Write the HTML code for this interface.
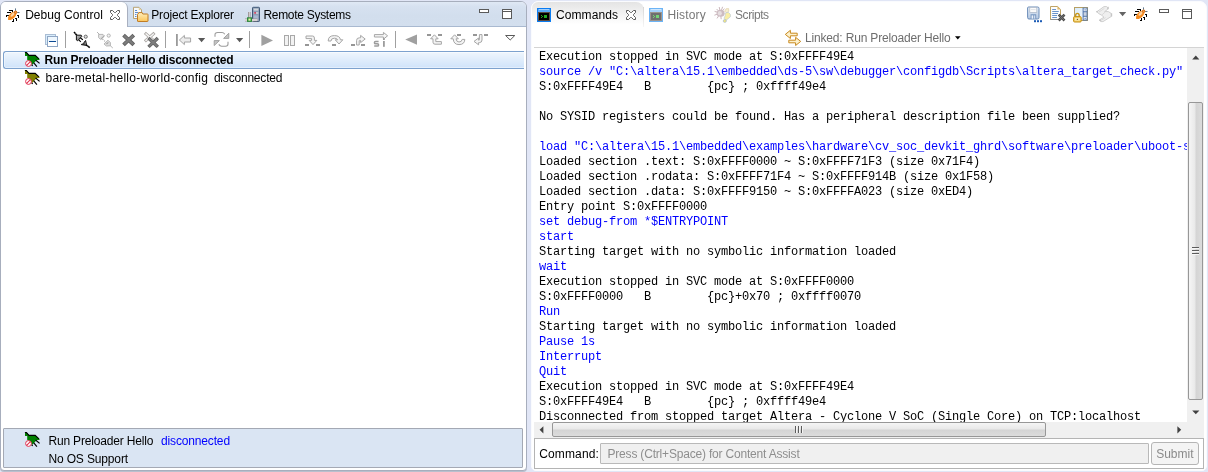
<!DOCTYPE html>
<html>
<head>
<meta charset="utf-8">
<style>
html,body{margin:0;padding:0;}
body{width:1208px;height:472px;background:#e1e6f6;position:relative;overflow:hidden;font-family:"Liberation Sans",sans-serif;font-size:12px;color:#000;}
.abs{position:absolute;}
.t{position:absolute;white-space:nowrap;line-height:14px;height:14px;}
svg{position:absolute;overflow:visible;}
.sep{position:absolute;width:1px;top:31px;height:17px;background:#a0a0a0;}
.con{position:absolute;font-family:"Liberation Mono",monospace;font-size:12px;letter-spacing:-0.2px;line-height:15px;white-space:pre;color:#000;}
.con .b{color:#0000ff;}
</style>
</head>
<body>
<div id="wrap" style="position:absolute;left:0;top:0;width:1208px;height:472px;will-change:transform;">
<!-- ================= LEFT PANEL ================= -->
<div class="abs" id="lp" style="left:0;top:1px;width:527px;height:470px;box-sizing:border-box;border:1px solid #a7aebd;border-radius:6px 6px 4px 4px;background:#fff;overflow:hidden;box-shadow:0 1px 0 #b9bfcd;"></div>
<!-- tab bar -->
<div class="abs" style="left:1px;top:2px;width:525px;height:24px;border-radius:5px 5px 0 0;background:linear-gradient(#e0e9f5 0%,#d6e1f0 20%,#d2deed 60%,#d3dfee 100%);"></div>
<div class="abs" style="left:1px;top:26px;width:525px;height:1px;background:#a9b9d0;"></div>
<!-- active tab -->
<div class="abs" style="left:1px;top:2px;width:127px;height:25px;background:#fff;border-radius:5px 6px 0 0;border-right:1px solid #a9b0c0;box-sizing:border-box;"></div>
<div class="t" id="tDebug" style="left:25.2px;top:8px;letter-spacing:0.02px;">Debug Control</div>
<div class="t" id="tProj" style="left:151.3px;top:8px;letter-spacing:-0.18px;">Project Explorer</div>
<div class="t" id="tRemote" style="left:263.4px;top:8px;letter-spacing:-0.29px;">Remote Systems</div>

<!-- toolbar separators -->
<div class="sep" style="left:65px;"></div>
<div class="sep" style="left:165px;"></div>
<div class="sep" style="left:249px;"></div>
<div class="sep" style="left:395px;"></div>

<!-- tree -->
<div class="abs" style="left:3px;top:51px;width:521px;height:18px;box-sizing:border-box;border:1px solid #7da2ce;border-right:none;border-radius:3px 0 0 3px;background:linear-gradient(#eff6fd,#cfe3fa);box-shadow:inset 0 1px 0 rgba(255,255,255,0.55), inset 0 -1px 0 rgba(255,255,255,0.4), inset 1px 0 0 rgba(255,255,255,0.4);"></div>
<div class="t" id="tRow1" style="left:44.6px;top:53px;font-weight:bold;letter-spacing:-0.21px;">Run Preloader Hello disconnected</div>
<div class="t" id="tRow2" style="left:45.5px;top:71px;"><span style="letter-spacing:0.25px;">bare-metal-hello-world-config</span><span style="letter-spacing:-0.2px;position:absolute;left:168.4px;">disconnected</span></div>

<!-- status -->
<div class="abs" style="left:3px;top:428px;width:520px;height:40px;box-sizing:border-box;border:1px solid #a4a9b4;border-radius:1px;background:#dae5f3;"></div>
<div class="t" id="tSt1" style="left:48.4px;top:434px;letter-spacing:-0.17px;">Run Preloader Hello</div>
<div class="t" id="tSt2" style="left:161px;top:434px;color:#0000ff;letter-spacing:-0.15px;">disconnected</div>
<div class="t" id="tSt3" style="left:48.4px;top:452px;letter-spacing:-0.14px;">No OS Support</div>

<!-- ================= RIGHT PANEL ================= -->
<div class="abs" id="rp" style="left:531px;top:1px;width:676px;height:470px;box-sizing:border-box;border:1px solid #fafbfe;border-radius:7px 7px 5px 5px;background:#fff;overflow:hidden;"></div>
<!-- commands tab -->
<div class="abs" style="left:532px;top:2px;width:112px;height:25px;border-radius:6px 8px 0 0;background:linear-gradient(#e4e4e4 0%,#f1f1f1 40%,#ffffff 90%);"></div><div class="abs" style="left:643px;top:7px;width:1px;height:20px;background:linear-gradient(#d6d6d6,#f6f6f6);"></div>
<div class="t" id="tCmds" style="left:556px;top:8px;letter-spacing:0.08px;">Commands</div>
<div class="t" id="tHist" style="left:667.4px;top:8px;color:#787878;letter-spacing:0.16px;">History</div>
<div class="t" id="tScr" style="left:735px;top:8px;color:#787878;letter-spacing:-0.43px;">Scripts</div>
<div class="t" id="tLink" style="left:805px;top:31px;color:#6e6e6e;letter-spacing:-0.17px;">Linked: Run Preloader Hello</div>
<div class="abs" style="left:534px;top:47px;width:670px;height:1px;background:#d4d4d4;"></div>

<!-- console -->
<div class="abs" style="left:534px;top:48px;width:653px;height:374px;overflow:hidden;">
<div class="con" style="left:5px;top:2px;">Execution stopped in SVC mode at S:0xFFFF49E4
<span class="b">source /v "C:\altera\15.1\embedded\ds-5\sw\debugger\configdb\Scripts\altera_target_check.py"</span>
S:0xFFFF49E4   B        {pc} ; 0xffff49e4

No SYSID registers could be found. Has a peripheral description file been supplied?

<span class="b">load "C:\altera\15.1\embedded\examples\hardware\cv_soc_devkit_ghrd\software\preloader\uboot-s</span>
Loaded section .text: S:0xFFFF0000 ~ S:0xFFFF71F3 (size 0x71F4)
Loaded section .rodata: S:0xFFFF71F4 ~ S:0xFFFF914B (size 0x1F58)
Loaded section .data: S:0xFFFF9150 ~ S:0xFFFFA023 (size 0xED4)
Entry point S:0xFFFF0000
<span class="b">set debug-from *$ENTRYPOINT</span>
<span class="b">start</span>
Starting target with no symbolic information loaded
<span class="b">wait</span>
Execution stopped in SVC mode at S:0xFFFF0000
S:0xFFFF0000   B        {pc}+0x70 ; 0xffff0070
<span class="b">Run</span>
Starting target with no symbolic information loaded
<span class="b">Pause 1s</span>
<span class="b">Interrupt</span>
<span class="b">Quit</span>
Execution stopped in SVC mode at S:0xFFFF49E4
S:0xFFFF49E4   B        {pc} ; 0xffff49e4
Disconnected from stopped target Altera - Cyclone V SoC (Single Core) on TCP:localhost</div>
</div>

<!-- vertical scrollbar -->
<div class="abs" id="vsb" style="left:1187px;top:48px;width:17px;height:374px;background:#f0f0f0;"></div>
<div class="abs" id="vthumb" style="left:1188px;top:102px;width:15px;height:298px;box-sizing:border-box;border:1px solid #979797;border-radius:2px;background:linear-gradient(90deg,#f5f5f5 0%,#e9e9e9 45%,#d4d4d4 55%,#dcdcdc 100%);"></div>
<!-- horizontal scrollbar -->
<div class="abs" id="hsb" style="left:534px;top:422px;width:653px;height:16px;background:#f0f0f0;"></div>
<div class="abs" id="hthumb" style="left:552px;top:422px;width:494px;height:15px;box-sizing:border-box;border:1px solid #979797;border-radius:2px;background:linear-gradient(#f5f5f5 0%,#e9e9e9 45%,#d4d4d4 55%,#dcdcdc 100%);"></div>
<div class="abs" style="left:1187px;top:422px;width:17px;height:16px;background:#f0f0f0;"></div>

<!-- command row -->
<div class="abs" style="left:534px;top:438px;width:670px;height:31px;box-sizing:border-box;border:1px solid #b4b4b4;background:#fff;"></div>
<div class="t" id="tCmd" style="left:539.2px;top:447px;letter-spacing:0.15px;">Command:</div>
<div class="abs" style="left:600px;top:443px;width:549px;height:21px;box-sizing:border-box;border:1px solid #b9b9b9;border-radius:1px;background:#f0f0f0;"></div>
<div class="t" id="tPh" style="left:607.5px;top:447px;color:#8e8e8e;letter-spacing:-0.19px;">Press (Ctrl+Space) for Content Assist</div>
<div class="abs" style="left:1151px;top:442px;width:48px;height:23px;box-sizing:border-box;border:1px solid #b5b5b5;border-radius:3px;background:#f4f4f4;"></div>
<div class="t" id="tSub" style="left:1156.2px;top:447px;color:#8a8a8a;">Submit</div>

<!-- ICONS-BEGIN -->
<!-- horses -->
<svg style="left:24px;top:51px;" width="16" height="16" viewBox="0 0 16 16">
<polygon points="1,1.6 3,1.6 5.2,4.2 11.3,4.2 15.6,8 15.4,9 12.8,9 8.3,13.8 7.2,13.2 3.2,8.8 3.2,5 1,5" fill="#008000"/>
<path d="M0.9,1.5 L2.9,1.5 M2.4,1.6 L5,4.4 L11.2,4.4 L14.9,7.8" fill="none" stroke="#000" stroke-width="1.1"/>
<path d="M11.6,9 L15.6,12.4 M9.6,11.6 L12.9,15.6 M7.6,13.6 L8.6,15" fill="none" stroke="#000" stroke-width="1.2"/>
<circle cx="4.5" cy="12.5" r="2.9" fill="#fff" stroke="#e2304e" stroke-width="1"/>
<path d="M2.6,14.4 L6.4,10.6" stroke="#e2304e" stroke-width="1.1"/>
</svg><svg style="left:24px;top:69px;" width="16" height="16" viewBox="0 0 16 16">
<polygon points="1,1.6 3,1.6 5.2,4.2 11.3,4.2 15.6,8 15.4,9 12.8,9 8.3,13.8 7.2,13.2 3.2,8.8 3.2,5 1,5" fill="#808000"/>
<path d="M0.9,1.5 L2.9,1.5 M2.4,1.6 L5,4.4 L11.2,4.4 L14.9,7.8" fill="none" stroke="#000" stroke-width="1.1"/>
<path d="M11.6,9 L15.6,12.4 M9.6,11.6 L12.9,15.6 M7.6,13.6 L8.6,15" fill="none" stroke="#000" stroke-width="1.2"/>
<circle cx="4.5" cy="12.5" r="2.9" fill="#fff" stroke="#e2304e" stroke-width="1"/>
<path d="M2.6,14.4 L6.4,10.6" stroke="#e2304e" stroke-width="1.1"/>
</svg><svg style="left:24px;top:431px;" width="16" height="16" viewBox="0 0 16 16">
<polygon points="1,1.6 3,1.6 5.2,4.2 11.3,4.2 15.6,8 15.4,9 12.8,9 8.3,13.8 7.2,13.2 3.2,8.8 3.2,5 1,5" fill="#008000"/>
<path d="M0.9,1.5 L2.9,1.5 M2.4,1.6 L5,4.4 L11.2,4.4 L14.9,7.8" fill="none" stroke="#000" stroke-width="1.1"/>
<path d="M11.6,9 L15.6,12.4 M9.6,11.6 L12.9,15.6 M7.6,13.6 L8.6,15" fill="none" stroke="#000" stroke-width="1.2"/>
<circle cx="4.5" cy="12.5" r="2.9" fill="#fff" stroke="#e2304e" stroke-width="1"/>
<path d="M2.6,14.4 L6.4,10.6" stroke="#e2304e" stroke-width="1.1"/>
</svg>
<!-- /horses -->
<!-- bugs -->
<svg style="left:4px;top:6px;" width="16" height="17" viewBox="0 0 16 17">
<path d="M5,4.5 H9 M8.5,4 V6 M3,6.5 H6.5 M2.5,9 V11 M2,9.5 H5 M13,9.5 H15 M14.5,9 V12 M11,12.5 H13 M12.5,12 V15 M9.5,13 V16 M8,15.5 H10" fill="none" stroke="#000" stroke-width="1" shape-rendering="crispEdges"/>
<path d="M11.5,2.4 V4.8 M13.1,6.5 H15.5" fill="none" stroke="#5f788f" stroke-width="1"/>
<ellipse cx="0" cy="0" rx="5.1" ry="2.9" transform="translate(8.2,9.8) rotate(-45)" fill="#f58c22"/>
<ellipse cx="0" cy="0" rx="2.8" ry="1.2" transform="translate(8.6,8.6) rotate(-45)" fill="#fbd3a4"/>
<path d="M3.9,14 L5.4,10.7 L7.2,13.9 Z" fill="#f58c22"/>
<circle cx="11.6" cy="6.3" r="1.7" fill="#d9701c"/>
<circle cx="11.7" cy="6.2" r="0.6" fill="#f7b45c"/>
</svg><svg style="left:1132px;top:5px;" width="16" height="17" viewBox="0 0 16 17">
<path d="M5,4.5 H9 M8.5,4 V6 M3,6.5 H6.5 M2.5,9 V11 M2,9.5 H5 M13,9.5 H15 M14.5,9 V12 M11,12.5 H13 M12.5,12 V15 M9.5,13 V16 M8,15.5 H10" fill="none" stroke="#000" stroke-width="1" shape-rendering="crispEdges"/>
<path d="M11.5,2.4 V4.8 M13.1,6.5 H15.5" fill="none" stroke="#5f788f" stroke-width="1"/>
<ellipse cx="0" cy="0" rx="5.1" ry="2.9" transform="translate(8.2,9.8) rotate(-45)" fill="#f58c22"/>
<ellipse cx="0" cy="0" rx="2.8" ry="1.2" transform="translate(8.6,8.6) rotate(-45)" fill="#fbd3a4"/>
<path d="M3.9,14 L5.4,10.7 L7.2,13.9 Z" fill="#f58c22"/>
<circle cx="11.6" cy="6.3" r="1.7" fill="#d9701c"/>
<circle cx="11.7" cy="6.2" r="0.6" fill="#f7b45c"/>
</svg>
<!-- /bugs -->
<!-- close X (debug control tab) -->
<svg style="left:110px;top:10px;" width="10" height="10" viewBox="0 0 10 10"><polygon points="0.5,0.5 2.5,0.5 4.5,2.5 5.5,2.5 7.5,0.5 9.5,0.5 9.5,2.5 7.5,4.5 7.5,5.5 9.5,7.5 9.5,9.5 7.5,9.5 5.5,7.5 4.5,7.5 2.5,9.5 0.5,9.5 0.5,7.5 2.5,5.5 2.5,4.5 0.5,2.5" fill="#fff" stroke="#5a5a5a" stroke-width="1"/></svg>
<!-- close X (commands tab) -->
<svg style="left:626px;top:10px;" width="10" height="10" viewBox="0 0 10 10"><polygon points="0.5,0.5 2.5,0.5 4.5,2.5 5.5,2.5 7.5,0.5 9.5,0.5 9.5,2.5 7.5,4.5 7.5,5.5 9.5,7.5 9.5,9.5 7.5,9.5 5.5,7.5 4.5,7.5 2.5,9.5 0.5,9.5 0.5,7.5 2.5,5.5 2.5,4.5 0.5,2.5" fill="#fff" stroke="#5a5a5a" stroke-width="1"/></svg>
<!-- project explorer -->
<svg style="left:132px;top:5px;" width="18" height="18" viewBox="0 0 18 18">
<defs><linearGradient id="fold" x1="0" y1="0" x2="0" y2="1"><stop offset="0" stop-color="#fff0c0"/><stop offset="1" stop-color="#fcc55a"/></linearGradient></defs>
<path d="M1.5,2.3 H7 L9.5,4.8 V13.5 H1.5 Z" fill="#f6f9fd" stroke="#b9a374" stroke-width="1"/>
<path d="M6.8,2.5 V5 H9.3 Z" fill="#e6cf96"/>
<path d="M3,5.5 H5 M3,7.5 H6 M3,9.5 H4.5 M3,11.5 H4.5" stroke="#5f8ccc" stroke-width="1"/>
<path d="M5.5,9.6 Q5.5,9 6.1,9 L6.6,7.6 H10.2 L10.8,9 H15.4 Q16,9 16,9.6 V16 Q16,16.5 15.4,16.5 H6.1 Q5.5,16.5 5.5,16 Z" fill="url(#fold)" stroke="#c07c24" stroke-width="1"/>
</svg>
<!-- remote systems -->
<svg style="left:244px;top:5px;" width="18" height="18" viewBox="0 0 18 18">
<rect x="8.5" y="2.3" width="7" height="14.2" rx="0.8" fill="#8d9eb6" stroke="#3f5877" stroke-width="1"/>
<rect x="9.7" y="3.6" width="4.6" height="2" fill="#d2d6dc"/>
<rect x="9.7" y="7" width="4.6" height="2" fill="#c3c9d3"/>
<rect x="10.2" y="7.2" width="1.8" height="1.4" fill="#d3274a"/>
<rect x="9.7" y="10.4" width="4.2" height="5.4" fill="#a9b9d2"/>
<rect x="4" y="7" width="2.6" height="6" fill="#9a9496"/><rect x="4.9" y="7" width="0.9" height="6" fill="#dcd8d8"/>
<rect x="1" y="13.6" width="12.4" height="2.8" fill="#8e8686"/><rect x="1" y="14.3" width="12.4" height="1.4" fill="#f8f5f2"/>
<rect x="3" y="12.3" width="5" height="4.6" fill="#2d8a3c"/><rect x="4.4" y="13.5" width="2.2" height="2.2" fill="#e4f6a8"/>
</svg>
<!-- commands -->
<svg style="left:537px;top:8px;" width="14" height="14" viewBox="0 0 14 14" shape-rendering="crispEdges">
<rect x="0" y="0" width="14" height="14" fill="#0a7cf2"/>
<rect x="1" y="1" width="12" height="3" fill="#5aaaf8"/><rect x="2" y="1" width="10" height="1" fill="#a6d0fb"/>
<rect x="1" y="4" width="12" height="9" fill="#5b4b43"/><rect x="2" y="5" width="10" height="7" fill="#000"/>
<rect x="7" y="7" width="3" height="3" fill="#22a822"/>
<path d="M4,7 h1 v1 h1 v1 h-1 v1 h-1 v-1 h1 v-1 h-1 z" fill="#22a822"/>
</svg>
<!-- history -->
<svg style="left:649px;top:8px;" width="14" height="14" viewBox="0 0 14 14" shape-rendering="crispEdges">
<rect x="0" y="0" width="14" height="14" fill="#6cb4f6"/>
<rect x="1" y="1" width="12" height="3" fill="#a6d2fb"/><rect x="2" y="1" width="10" height="1" fill="#cfe6fd"/>
<rect x="1" y="4" width="12" height="9" fill="#9c948e"/><rect x="2" y="5" width="10" height="7" fill="#6f6f6f"/>
<rect x="7" y="7" width="3" height="3" fill="#74d474"/>
<path d="M4,7 h1 v1 h1 v1 h-1 v1 h-1 v-1 h1 v-1 h-1 z" fill="#74d474"/>
</svg>
<!-- scripts -->
<svg style="left:714px;top:6px;" width="18" height="18" viewBox="0 0 18 18">
<path d="M6.5,7 L2.6,3 M6.5,7 L5.2,1 M6.5,7 L8.6,0.8 M6.5,7 L0.6,5.4 M6.5,7 L0.4,9.2 M6.5,7 L3,12.4 M6.5,7 L7.2,13.2 M6.5,7 L10.4,2.6" stroke="#cbb8bd" stroke-width="1" fill="none"/>
<ellipse cx="6.6" cy="7.3" rx="4" ry="3.5" fill="#cdbcc2"/>
<ellipse cx="5.8" cy="7.2" rx="2" ry="2.2" fill="#e6dee1"/>
<path d="M10.6,5.4 L12,2.8 L14.6,2.6 L14.8,5.2 L13,6.8 Z" fill="#f6efd2" stroke="#dcc9a0" stroke-width="0.6"/>
<path d="M11.2,7.2 L14.2,6.2 Q17.4,8.2 16.4,10.8 L12,14.4 L10,12.2 Q11.6,10 11.2,7.2 Z" fill="#f9eea6" stroke="#b4c6de" stroke-width="0.6"/>
<ellipse cx="10.8" cy="15" rx="1.6" ry="1.4" fill="#f6e87e" stroke="#9fb6d8" stroke-width="0.6"/>
</svg>
<!-- linked -->
<svg style="left:784px;top:29px;" width="18" height="18" viewBox="0 0 18 18">
<path d="M1.3,5.4 L6.4,1.3 V4.2 H13.2 V6.8 H6.4 V9.5 Z" fill="#fdf1cc" stroke="#c8891e" stroke-width="1" stroke-linejoin="round"/>
<path d="M16.7,12.4 L11.6,8.3 V11.2 H4.8 V13.8 H11.6 V16.5 Z" fill="#fdf1cc" stroke="#c8891e" stroke-width="1" stroke-linejoin="round"/>
</svg>
<!-- linked dropdown arrow -->
<svg style="left:955px;top:36px;" width="6" height="4" viewBox="0 0 6 4"><polygon points="0,0.3 5.6,0.3 2.8,3.4" fill="#000"/></svg>
<!-- collapse all -->
<svg style="left:45px;top:34px;" width="13" height="13" viewBox="0 0 13 13" shape-rendering="crispEdges">
<rect x="0.5" y="0.5" width="10" height="10" fill="#d8edfc" stroke="#aabdd4"/>
<rect x="2.5" y="2.5" width="10" height="10" fill="#eef7fe" stroke="#8fa6c4"/>
<rect x="3" y="8" width="9" height="4" fill="#ffffff"/>
<rect x="4" y="6.5" width="7" height="1.6" fill="#0c4a94"/>
</svg>
<!-- connect -->
<svg style="left:73px;top:31px;" width="18" height="18" viewBox="0 0 18 18">
<defs><linearGradient id="plg" x1="0" y1="0" x2="1" y2="1"><stop offset="0" stop-color="#d0d0d0"/><stop offset="1" stop-color="#4a4a4a"/></linearGradient></defs>
<path d="M1,1 L3.8,4.2" stroke="#000" stroke-width="1.5"/>
<path d="M2.2,2.4 l0.5,0.6" stroke="#fff" stroke-width="0.6"/>
<path d="M3.4,4.2 H8.2 L8.8,5.4 L4.6,9.8 L3.4,9 Z" fill="url(#plg)" stroke="#111" stroke-width="1" stroke-linejoin="round"/>
<path d="M7.4,7 L9.9,8.8 M5.8,8.8 L7.8,10.8" stroke="#000" stroke-width="1.1"/>
<circle cx="12.7" cy="5.7" r="1.6" fill="#dedede" stroke="#6a6a6a" stroke-width="1"/>
<path d="M12.6,9.4 L13.8,14.6 L8.2,13.6 L9,13 L10.6,13 L11,11.4 Z" fill="#5c5c5c" stroke="#111" stroke-width="0.9" stroke-linejoin="round"/>
<path d="M11.6,12.6 l0.8,-1.6 l0.4,2z" fill="#aaa"/>
<path d="M13.4,14 L16.7,16.7" stroke="#000" stroke-width="1.5"/>
<path d="M14.6,15 l0.6,0.5" stroke="#fff" stroke-width="0.6"/>
</svg>
<!-- disconnect (gray) -->
<svg style="left:96px;top:31px;" width="18" height="18" viewBox="0 0 18 18">
<path d="M1,1 L3.6,3.6" stroke="#b4b4b4" stroke-width="1"/>
<path d="M2.6,3.4 H7 L8.6,5 L4.8,8.6 L2.6,6.6 Z" fill="#e6e6e6" stroke="#b0b0b0" stroke-width="0.9"/>
<path d="M5,7.6 L8,4.8" stroke="#a0a0a0" stroke-width="1.6" stroke-dasharray="0.8,0.6"/>
<circle cx="12.7" cy="4.6" r="1.6" fill="#f4f4f4" stroke="#b4b4b4" stroke-width="1"/>
<path d="M6.5,8 L7.3,8.8 M8.2,9.6 L9,10.4" stroke="#a8a8a8" stroke-width="1.2"/>
<path d="M8,13 L12,9.2 L14.4,11.6 L14.4,14.8 L10.4,15 Z" fill="#dedede" stroke="#b0b0b0" stroke-width="0.9"/>
<path d="M10.4,13 l2,-1.6" stroke="#a4a4a4" stroke-width="1.2"/>
<path d="M14.2,14.6 L16.8,17" stroke="#b4b4b4" stroke-width="1"/>
</svg>
<!-- remove X -->
<svg style="left:122px;top:33px;" width="14" height="14" viewBox="0 0 14 14">
<path d="M2.9,3.4 L10.4,10.5 M10.4,3.4 L2.9,10.5" stroke="#606060" stroke-width="3.8" stroke-linecap="square"/>
<path d="M2.9,3.4 L10.4,10.5 M10.4,3.4 L2.9,10.5" stroke="#7c7c7c" stroke-width="2.2" stroke-linecap="square"/>
</svg>
<!-- remove all XX -->
<svg style="left:143px;top:31px;" width="17" height="18" viewBox="0 0 17 18">
<path d="M3,2.9 L10.4,9.4 M10.4,2.9 L3,9.4" stroke="#a8a4a0" stroke-width="3" stroke-linecap="square"/>
<path d="M3,2.9 L10.4,9.4 M10.4,2.9 L3,9.4" stroke="#f4f4f4" stroke-width="1.4" stroke-linecap="square"/>
<path d="M6.7,8.2 L13.6,14.7 M13.6,8.2 L6.7,14.7" stroke="#606060" stroke-width="3.4" stroke-linecap="square"/>
<path d="M6.7,8.2 L13.6,14.7 M13.6,8.2 L6.7,14.7" stroke="#7c7c7c" stroke-width="2" stroke-linecap="square"/>
</svg>
<!-- |<= -->
<svg style="left:176px;top:33px;" width="16" height="14" viewBox="0 0 16 14">
<rect x="0" y="1" width="1.8" height="12" fill="#9a9a9a"/>
<path d="M3.4,7 L8.4,2.4 V5 H14.6 V9 H8.4 V11.6 Z" fill="#ececec" stroke="#a4a4a4" stroke-width="1" stroke-linejoin="round"/>
</svg>
<svg style="left:198px;top:38px;" width="8" height="5" viewBox="0 0 8 5"><polygon points="0,0 7.2,0 3.6,4.2" fill="#585858"/></svg>
<!-- sync -->
<svg style="left:213px;top:31px;" width="17" height="17" viewBox="0 0 17 17">
<path d="M2,5.8 V3.8 Q2,1.5 4.6,1.5 H9 Q10.6,1.5 11.8,3.2" fill="none" stroke="#9c9c9c" stroke-width="1.1"/>
<path d="M15.8,2.2 V7.4 H10.6 Z" fill="#c4c4c4" stroke="#9c9c9c" stroke-width="0.9" stroke-linejoin="round"/>
<path d="M15,10.8 V13 Q15,15.2 12.6,15.2 H8.6 Q7,15.2 5.8,13.4" fill="none" stroke="#9c9c9c" stroke-width="1.1"/>
<path d="M1.2,14.6 V9.6 H6.4 Z" fill="#c4c4c4" stroke="#9c9c9c" stroke-width="0.9" stroke-linejoin="round"/>
</svg>
<svg style="left:236px;top:38px;" width="8" height="5" viewBox="0 0 8 5"><polygon points="0,0 7.2,0 3.6,4.2" fill="#585858"/></svg>
<!-- play -->
<svg style="left:261px;top:34px;" width="13" height="13" viewBox="0 0 13 13"><polygon points="0.4,0.8 12,6.4 0.4,12" fill="#a0a0a0"/></svg>
<!-- pause -->
<svg style="left:284px;top:35px;" width="11" height="11" viewBox="0 0 11 11" shape-rendering="crispEdges">
<rect x="0.5" y="0.5" width="4" height="10" fill="#f2f2f2" stroke="#a8a8a8"/>
<rect x="6.5" y="0.5" width="4" height="10" fill="#f2f2f2" stroke="#a8a8a8"/>
</svg>
<!-- step into -->
<svg style="left:305px;top:34px;" width="16" height="13" viewBox="0 0 16 13">
<path d="M1,2 H7.6 Q9.4,2 9.4,4 V6.4 H11.8 L8,10.6 L4.2,6.4 H6.6 V4.6 H1 Z" fill="#f4f4f4" stroke="#a6a6a6" stroke-width="1" stroke-linejoin="round"/>
<rect x="0" y="10" width="4" height="2" fill="#969696" shape-rendering="crispEdges"/><rect x="11" y="10" width="4" height="2" fill="#969696" shape-rendering="crispEdges"/>
</svg>
<!-- step over -->
<svg style="left:327px;top:34px;" width="17" height="13" viewBox="0 0 17 13">
<path d="M1.2,7 Q1.2,1.6 7.4,1.6 Q13,1.6 13.4,5.8 H15.8 L12,10 L8.2,5.8 H10.6 Q10.2,4.2 7.4,4.2 Q4,4.2 4,7 Z" fill="#f4f4f4" stroke="#a6a6a6" stroke-width="1" stroke-linejoin="round"/>
<rect x="4.6" y="10" width="4" height="2" fill="#969696" shape-rendering="crispEdges"/>
</svg>
<!-- step return -->
<svg style="left:351px;top:34px;" width="16" height="13" viewBox="0 0 16 13">
<path d="M5.6,11 V6.4 Q5.6,3.8 8.4,3.8 H9.6 V1.4 L14.2,5 L9.6,8.6 V6.4 H8.6 Q8.2,6.4 8.2,7 V11 Z" fill="#f4f4f4" stroke="#a6a6a6" stroke-width="1" stroke-linejoin="round"/>
<rect x="0.4" y="10" width="3.6" height="2" fill="#969696" shape-rendering="crispEdges"/><rect x="10.4" y="10" width="4" height="2" fill="#969696" shape-rendering="crispEdges"/>
</svg>
<!-- si -->
<svg style="left:373px;top:31px;" width="16" height="17" viewBox="0 0 16 17">
<path d="M1.4,3.6 H10.4 V1.4 L14.6,4.8 L10.4,8.2 V6 H1.4 Z" fill="#f6f6f6" stroke="#a6a6a6" stroke-width="1" stroke-linejoin="round"/>
<path d="M5.6,10.6 H2.6 Q1.4,10.6 1.4,11.7 Q1.4,12.8 2.6,12.8 H4.4 Q5.6,12.8 5.6,13.9 Q5.6,15 4.4,15 H1.2" fill="none" stroke="#9c9c9c" stroke-width="1.5"/><rect x="10" y="10" width="1.8" height="5.8" fill="#9c9c9c"/><rect x="10" y="7.4" width="1.8" height="1.6" fill="#9c9c9c"/>
</svg>
<!-- reverse play -->
<svg style="left:405px;top:34px;" width="13" height="12" viewBox="0 0 13 12"><polygon points="12,0.4 0.2,5.6 12,10.8" fill="#a0a0a0"/></svg>
<!-- rev step 1 -->
<svg style="left:427px;top:34px;" width="16" height="12" viewBox="0 0 16 12">
<rect x="0" y="0" width="4" height="2" fill="#969696" shape-rendering="crispEdges"/><rect x="10.6" y="0" width="4" height="2" fill="#969696" shape-rendering="crispEdges"/>
<path d="M7.4,0.8 L11.2,4.8 H8.8 V7.6 H14.4 V10.2 H8 Q6,10.2 6,8.2 V4.8 H3.6 Z" fill="#f4f4f4" stroke="#a6a6a6" stroke-width="1" stroke-linejoin="round"/>
</svg>
<!-- rev step 2 -->
<svg style="left:450px;top:34px;" width="16" height="12" viewBox="0 0 16 12">
<rect x="7" y="0" width="4" height="2" fill="#969696" shape-rendering="crispEdges"/>
<path d="M4.6,0.8 L8.4,4.8 H6 Q6.4,8 9,8 Q11.8,8 12.2,5.4 L14.8,5.4 Q14.6,10.6 9,10.6 Q3.6,10.6 3.2,4.8 H0.8 Z" fill="#f4f4f4" stroke="#a6a6a6" stroke-width="1" stroke-linejoin="round"/>
</svg>
<!-- rev step 3 -->
<svg style="left:473px;top:34px;" width="16" height="12" viewBox="0 0 16 12">
<rect x="0" y="0" width="4" height="2" fill="#969696" shape-rendering="crispEdges"/><rect x="11" y="0" width="4" height="2" fill="#969696" shape-rendering="crispEdges"/>
<path d="M6.4,0.6 H9 V6 Q9,8.6 6.4,8.6 H5.6 V10.8 L1,7.4 L5.6,4 V6.2 H6 Q6.4,6.2 6.4,5.6 Z" fill="#f4f4f4" stroke="#a6a6a6" stroke-width="1" stroke-linejoin="round"/>
</svg>
<!-- view menu -->
<svg style="left:505px;top:35px;" width="11" height="6" viewBox="0 0 11 6"><polygon points="0.6,0.5 9.8,0.5 5.2,5" fill="#fff" stroke="#5a5a5a" stroke-width="1"/></svg>
<!-- min / max left -->
<svg style="left:479px;top:9px;" width="10" height="4" viewBox="0 0 10 4" shape-rendering="crispEdges"><rect x="0.5" y="0.5" width="9" height="3" fill="#fff" stroke="#5a5a5a"/></svg>
<svg style="left:502px;top:9px;" width="10" height="10" viewBox="0 0 10 10" shape-rendering="crispEdges"><rect x="0.5" y="0.5" width="9" height="9" fill="#fff" stroke="#5a5a5a"/><rect x="0" y="2" width="10" height="1" fill="#5a5a5a"/></svg>
<!-- save... -->
<svg style="left:1027px;top:6px;" width="16" height="17" viewBox="0 0 16 17">
<defs><linearGradient id="flp" x1="0" y1="0" x2="0" y2="1"><stop offset="0" stop-color="#e6eef8"/><stop offset="1" stop-color="#b4c8e2"/></linearGradient></defs>
<path d="M1.6,1 H10.6 Q12,1 12,2.4 V11.6 Q12,13 10.6,13 H2 Q0.6,13 0.6,11.6 V2 Q0.6,1 1.6,1 Z" fill="url(#flp)" stroke="#6b8cb8" stroke-width="1"/>
<rect x="2.8" y="1.4" width="7" height="5" fill="#fbfbfb" stroke="#aab6c6" stroke-width="0.7"/>
<path d="M4,3.6 H8.6" stroke="#d4d8de" stroke-width="0.7"/>
<rect x="3.6" y="8.2" width="5.6" height="4.8" fill="#7d9cc4"/>
<rect x="4.6" y="9.4" width="1.6" height="3.2" fill="#eef3fa"/><rect x="7" y="9.4" width="1.2" height="3.2" fill="#cfdcee"/>
<rect x="7" y="14.2" width="2" height="2" fill="#1d5cb6"/><rect x="10" y="14.2" width="2" height="2" fill="#1d5cb6"/><rect x="13" y="14.2" width="2" height="2" fill="#1d5cb6"/>
</svg>
<!-- doc with X -->
<svg style="left:1050px;top:5px;" width="16" height="17" viewBox="0 0 16 17">
<path d="M0.5,1.5 H7.6 L10.5,4.4 V14.5 H0.5 Z" fill="#fdfdfd" stroke="#bfa365" stroke-width="1"/>
<path d="M0.5,14.5 H10.5" stroke="#8e8e8e" stroke-width="1"/>
<path d="M7.4,1.6 V4.6 H10.4 Z" fill="#e2b96a"/>
<path d="M2.2,4.5 H6 M2.2,6.5 H8.8 M2.2,8.5 H8 M2.2,10.5 H7 M2.2,12.5 H7" stroke="#6b93cb" stroke-width="1"/>
<path d="M9.6,10.6 L13.6,14.6 M13.6,10.6 L9.6,14.6" stroke="#4a4a4a" stroke-width="2.6" stroke-linecap="square"/>
<path d="M9.6,10.6 L13.6,14.6 M13.6,10.6 L9.6,14.6" stroke="#7a7a7a" stroke-width="0.9" stroke-linecap="square"/>
</svg>
<!-- scroll lock -->
<svg style="left:1073px;top:6px;" width="16" height="17" viewBox="0 0 16 17">
<defs><linearGradient id="slw" x1="0" y1="0" x2="1" y2="1"><stop offset="0" stop-color="#d8ecfc"/><stop offset="1" stop-color="#f6f9fd"/></linearGradient></defs>
<rect x="1.5" y="1.5" width="13" height="13" fill="url(#slw)" stroke="#b7a064" stroke-width="1"/>
<rect x="9.6" y="1.6" width="5" height="13" fill="#5276ac"/>
<rect x="10.6" y="2.4" width="3" height="2.8" fill="#f4f8fd"/><rect x="11.6" y="3.4" width="1" height="1" fill="#2b4f8c"/>
<rect x="10.6" y="6.2" width="3" height="3.6" fill="#c9d3e2"/>
<rect x="10.6" y="10.8" width="3" height="2.8" fill="#f4f8fd"/><rect x="11.6" y="11.8" width="1" height="1" fill="#2b4f8c"/>
<path d="M2.6,11 V9.6 Q2.6,7.4 4.4,7.4 Q6.2,7.4 6.2,9.6 V11" fill="none" stroke="#c99718" stroke-width="1.4"/>
<rect x="0.6" y="10.6" width="7.6" height="5.4" rx="1" fill="#f3cf6a" stroke="#c48f12" stroke-width="1"/>
<rect x="2" y="12" width="4.8" height="2.6" fill="#fbeab0"/>
<path d="M3.6,14 L4.4,12.4 L5.2,14 Z" fill="#6b4a12"/>
</svg>
<!-- gray scroll -->
<svg style="left:1096px;top:5px;" width="17" height="18" viewBox="0 0 17 18">
<path d="M1,6.6 L8,1.6 H10.6 L11.6,2.6 V4.4 L8.6,6.6 L12.4,6.6 L15.4,8.6 V11.4 L7,16.6 L4.6,16.6 L3.4,15 L8,12.2 L5.6,10.2 L2.4,8.4 Z" fill="#efefef" stroke="#cfcfcf" stroke-width="1" stroke-linejoin="round"/>
<path d="M3,7 L8.4,3.4 M5.8,10 L9,7.2 M5,15.4 L9.6,12.6" stroke="#d4d4d4" stroke-width="0.8" fill="none"/>
<rect x="11.4" y="1.8" width="1.4" height="2.4" fill="#c6c6c6"/><rect x="14.8" y="8.4" width="1.4" height="3" fill="#c6c6c6"/><rect x="0.2" y="6" width="1.6" height="1.4" fill="#c6c6c6"/><rect x="3.4" y="14.6" width="1.6" height="1.4" fill="#c6c6c6"/>
</svg>
<svg style="left:1119px;top:12px;" width="8" height="5" viewBox="0 0 8 5"><polygon points="0,0 7.2,0 3.6,4.2" fill="#646464"/></svg>
<!-- min / max right -->
<svg style="left:1159px;top:9px;" width="10" height="4" viewBox="0 0 10 4" shape-rendering="crispEdges"><rect x="0.5" y="0.5" width="9" height="3" fill="#fff" stroke="#5a5a5a"/></svg>
<svg style="left:1182px;top:9px;" width="10" height="10" viewBox="0 0 10 10" shape-rendering="crispEdges"><rect x="0.5" y="0.5" width="9" height="9" fill="#fff" stroke="#5a5a5a"/><rect x="0" y="2" width="10" height="1" fill="#5a5a5a"/></svg>
<!-- scrollbar arrows -->
<svg style="left:1192px;top:55px;" width="8" height="5" viewBox="0 0 8 5"><polygon points="0.2,4.4 3.8,0.6 7.4,4.4" fill="#404040"/></svg>
<svg style="left:1192px;top:410px;" width="8" height="5" viewBox="0 0 8 5"><polygon points="0.2,0.4 7.4,0.4 3.8,4.2" fill="#404040"/></svg>
<svg style="left:539px;top:425.5px;" width="5" height="8" viewBox="0 0 5 8"><polygon points="4.4,0.2 0.6,3.8 4.4,7.4" fill="#404040"/></svg>
<svg style="left:1177px;top:425.5px;" width="5" height="8" viewBox="0 0 5 8"><polygon points="0.4,0.2 4.2,3.8 0.4,7.4" fill="#404040"/></svg>
<!-- grips -->
<svg style="left:1192px;top:247px;" width="7" height="9" viewBox="0 0 7 9" shape-rendering="crispEdges"><rect x="0" y="0" width="7" height="1" fill="#5c5c5c"/><rect x="0" y="1" width="7" height="1" fill="#f6f6f6"/><rect x="0" y="3" width="7" height="1" fill="#5c5c5c"/><rect x="0" y="4" width="7" height="1" fill="#f6f6f6"/><rect x="0" y="6" width="7" height="1" fill="#5c5c5c"/><rect x="0" y="7" width="7" height="1" fill="#f6f6f6"/></svg>
<svg style="left:795px;top:426px;" width="9" height="7" viewBox="0 0 9 7" shape-rendering="crispEdges"><rect x="0" y="0" width="1" height="7" fill="#5c5c5c"/><rect x="1" y="0" width="1" height="7" fill="#f6f6f6"/><rect x="3" y="0" width="1" height="7" fill="#5c5c5c"/><rect x="4" y="0" width="1" height="7" fill="#f6f6f6"/><rect x="6" y="0" width="1" height="7" fill="#5c5c5c"/><rect x="7" y="0" width="1" height="7" fill="#f6f6f6"/></svg>

<!-- ICONS-END -->
</div>
</body>
</html>
